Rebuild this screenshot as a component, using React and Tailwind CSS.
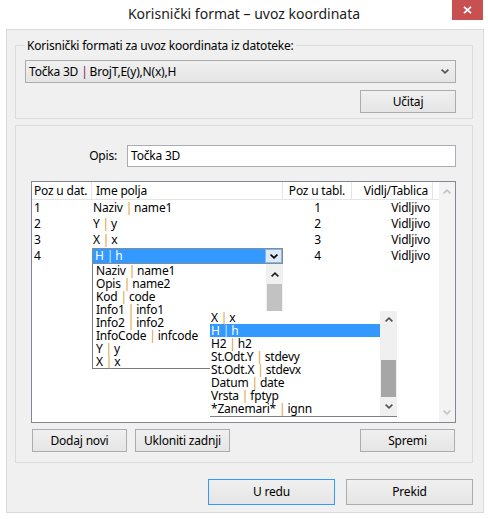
import React from 'react';

const Chevron = ({ up = false, className = '' }) => (
  <svg width="8" height="5" viewBox="0 0 8 5" className={className}>
    <path
      d={up ? 'M0.6 4.4 L4 1.2 L7.4 4.4' : 'M0.6 0.6 L4 3.8 L7.4 0.6'}
      fill="none"
      stroke="currentColor"
      strokeWidth="1.7"
    />
  </svg>
);

const Sep = ({ className = 'text-[#e0962a]' }) => <span className={`ml-[3px] mr-[2px] ${className}`}>|</span>;

const Pair = ({ a, b, sep }) => (
  <>
    {a}
    <Sep className={sep} />
    {b}
  </>
);

const Btn = ({ children, className = '' }) => (
  <button
    className={`h-[23px] w-[95px] border border-[#acacac] bg-gradient-to-b from-[#f0f0f0] to-[#e5e5e5] text-[12px] tracking-[-0.2px] text-black ${className}`}
  >
    {children}
  </button>
);

const rows = [
  { pos: '1', a: 'Naziv', b: 'name1', tab: '1' },
  { pos: '2', a: 'Y', b: 'y', tab: '2' },
  { pos: '3', a: 'X', b: 'x', tab: '3' },
];

const list1 = [
  ['Naziv', 'name1'],
  ['Opis', 'name2'],
  ['Kod', 'code'],
  ['Info1', 'info1'],
  ['Info2', 'info2'],
  ['InfoCode', 'infcode'],
  ['Y', 'y'],
  ['X', 'x'],
];

const list2 = [
  ['X', 'x'],
  ['H', 'h'],
  ['H2', 'h2'],
  ['St.Odt.Y', 'stdevy'],
  ['St.Odt.X', 'stdevx'],
  ['Datum', 'date'],
  ['Vrsta', 'fptyp'],
  ['*Zanemari*', 'ignn'],
];

export default function App() {
  return (
    <div className="relative w-[488px] h-[519px] bg-white text-[12px] leading-none tracking-[-0.2px] text-black font-['Noto_Sans',sans-serif]">
      {/* title bar */}
      <div className="h-[29px] flex items-center justify-center text-[14px] tracking-normal text-[#1b1b1b] pb-[1px]">
        Korisnički format – uvoz koordinata
      </div>
      <div className="absolute top-0 right-[5px] w-[31px] h-[20px] bg-[#c75050] flex items-center justify-center">
        <svg width="9" height="8" viewBox="0 0 9 8">
          <path d="M1 0.8 L8 7.2 M8 0.8 L1 7.2" stroke="white" strokeWidth="1.8" />
        </svg>
      </div>

      {/* client area */}
      <div className="ml-[6px] w-[478px] h-[484px] border border-[#d9d9d9] bg-[#f0f0f0] pt-[15px] pl-[8px]">
        {/* group 1 */}
        <div className="relative w-[458px] h-[74px] border border-[#dcdcdc] pt-[14px] pl-[9px]">
          <span className="absolute -top-[8px] left-[9px] px-[2px] bg-[#f0f0f0] leading-[15px]">
            Korisnički formati za uvoz koordinata iz datoteke:
          </span>
          <div className="w-[431px] h-[23px] border border-[#acacac] bg-gradient-to-b from-[#f0f0f0] to-[#e5e5e5] flex items-center pl-[3px] pr-[6px]">
            <span className="flex-1">
              <Pair a="Točka 3D" b="BrojT,E(y),N(x),H" sep="text-[#7a2456]" />
            </span>
            <Chevron className="text-[#555]" />
          </div>
          <div className="w-[431px] flex justify-end mt-[7px]">
            <Btn className="w-[96px]">Učitaj</Btn>
          </div>
        </div>

        {/* group 2 */}
        <div className="w-[458px] h-[338px] mt-[6px] border border-[#dcdcdc] pt-[19px] pl-[15px] pr-[16px]">
          <div className="flex items-center justify-end gap-[10px]">
            <span>Opis:</span>
            <div className="w-[329px] h-[22px] bg-white border border-[#abadb3] flex items-center pl-[3px]">
              Točka 3D
            </div>
          </div>

          {/* list view */}
          <div className="relative mt-[14px] h-[242px] border border-[#828790] bg-white flex">
            <div className="w-[407px]">
              <div className="h-[18px] flex border-b border-[#e5e5e5]">
                <div className="w-[60px] border-r border-[#e5e5e5] pl-[2px] flex items-center">Poz u dat.</div>
                <div className="w-[191px] border-r border-[#e5e5e5] pl-[4px] flex items-center">Ime polja</div>
                <div className="w-[69px] border-r border-[#e5e5e5] flex items-center justify-center">Poz u tabl.</div>
                <div className="w-[81px] border-r border-[#e5e5e5] pr-[4px] flex items-center justify-end">Vidlj/Tablica</div>
              </div>
              {rows.map((r) => (
                <div key={r.pos} className="h-[16px] flex items-center">
                  <div className="w-[60px] pl-[2px]">{r.pos}</div>
                  <div className="w-[191px] pl-[1px]">
                    <Pair a={r.a} b={r.b} />
                  </div>
                  <div className="w-[69px] text-center">{r.tab}</div>
                  <div className="w-[81px] pr-[3px] text-right">Vidljivo</div>
                </div>
              ))}
              <div className="h-[16px] flex items-center">
                <div className="w-[60px] pl-[2px]">4</div>
                <div className="w-[191px] h-[16px] bg-[#3399ff] border border-dotted border-[#c8843c] flex items-center text-white pl-[2px]">
                  <span className="flex-1">
                    <Pair a="H" b="h" sep="text-[#cfe6ff]" />
                  </span>
                  <div className="w-[17px] h-[14px] bg-[#dde9f6] border border-[#86b6e6] flex items-center justify-center text-black">
                    <Chevron />
                  </div>
                </div>
                <div className="w-[69px] text-center">4</div>
                <div className="w-[81px] pr-[3px] text-right">Vidljivo</div>
              </div>
            </div>
            <div className="flex-1 bg-[#f3f3f3] flex flex-col items-center justify-between py-[7px] text-[#c4c4c4]">
              <Chevron up />
              <Chevron />
            </div>

            {/* dropdown 1 */}
            <div className="absolute left-[60px] top-[82px] w-[191px] h-[105px] bg-white border-l border-b border-[#7a7a7a] flex">
              <div className="flex-1 pl-[3px]">
                {list1.map(([a, b]) => (
                  <div key={a} className="h-[13px] leading-[13px] flex items-center">
                    <span>
                      <Pair a={a} b={b} />
                    </span>
                  </div>
                ))}
              </div>
              <div className="w-[17px] bg-[#f0f0f0] flex flex-col">
                <div className="h-[20px] flex items-center justify-center text-[#222]">
                  <Chevron up />
                </div>
                <div className="mx-[1px] h-[60px] bg-[#c2c2c2]" />
              </div>
            </div>

            {/* dropdown 2 */}
            <div className="absolute left-[178px] top-[129px] w-[187px] h-[106px] bg-white border-b border-[#808080] flex">
              <div className="flex-1">
                {list2.map(([a, b], i) => (
                  <div
                    key={a}
                    className={`h-[13px] leading-[13px] flex items-center pl-[1px] ${i === 1 ? 'bg-[#3399ff] text-white' : ''}`}
                  >
                    <span>
                      <Pair a={a} b={b} sep={i === 1 ? 'text-[#cfe6ff]' : 'text-[#e0962a]'} />
                    </span>
                  </div>
                ))}
              </div>
              <div className="w-[17px] bg-[#f0f0f0] flex flex-col items-center">
                <div className="h-[17px] flex items-center justify-center text-[#555]">
                  <Chevron up />
                </div>
                <div className="mt-[32px] w-[15px] h-[37px] bg-[#a6a6a6]" />
                <div className="flex-1 flex items-center justify-center text-[#555]">
                  <Chevron />
                </div>
              </div>
            </div>
          </div>

          <div className="mt-[6px] flex">
            <Btn className="ml-[1px]">Dodaj novi</Btn>
            <Btn className="ml-[8px]">Ukloniti zadnji</Btn>
            <Btn className="ml-auto mr-[1px]">Spremi</Btn>
          </div>
        </div>

        {/* dialog buttons */}
        <div className="mt-[16px] w-[458px] flex justify-end gap-[11px]">
          <button className="w-[127px] h-[26px] border border-[#3399ff] bg-gradient-to-b from-[#f0f0f0] to-[#e5e5e5] text-[12px]">
            U redu
          </button>
          <button className="w-[127px] h-[26px] border border-[#acacac] bg-gradient-to-b from-[#f0f0f0] to-[#e5e5e5] text-[12px]">
            Prekid
          </button>
        </div>
      </div>
    </div>
  );
}
